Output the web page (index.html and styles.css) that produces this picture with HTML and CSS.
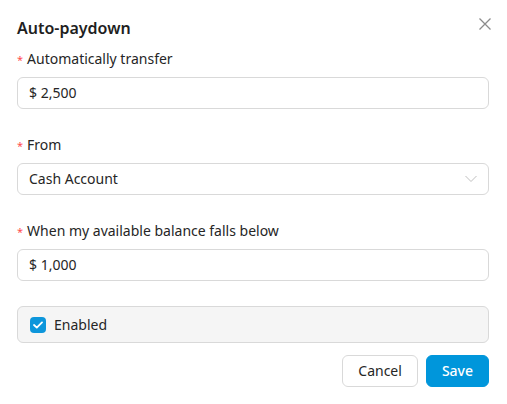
FILE: index.html
```html
<!DOCTYPE html>
<html>
<head>
<meta charset="utf-8">
<link rel="stylesheet" href="styles.css">
</head>
<body>
<div class="modal">
  <div class="header">
    <h1 class="title">Auto-paydown</h1>
    <button class="close" aria-label="Close">
      <svg width="12" height="12" viewBox="0 0 12 12"><path d="M0.5 0.5L11.5 11.5M11.5 0.5L0.5 11.5" stroke="#8c8c8c" stroke-width="1.3" fill="none"/></svg>
    </button>
  </div>
  <div class="field">
    <label class="label"><span class="req">*</span>Automatically transfer</label>
    <div class="input">$ 2,500</div>
  </div>
  <div class="field">
    <label class="label"><span class="req">*</span>From</label>
    <div class="input select">
      <span>Cash Account</span>
      <svg width="12" height="8" viewBox="0 0 12 8"><path d="M0.5 1L6 6.5L11.5 1" stroke="#bfbfbf" stroke-width="1" fill="none"/></svg>
    </div>
  </div>
  <div class="field">
    <label class="label"><span class="req">*</span>When my available balance falls below</label>
    <div class="input">$ 1,000</div>
  </div>
  <div class="enabled">
    <span class="check">
      <svg width="10" height="8" viewBox="0 0 10 8"><path d="M1 4L3.8 6.6L9 1.4" stroke="#fff" stroke-width="1.8" fill="none" stroke-linecap="round" stroke-linejoin="round"/></svg>
    </span>
    <span>Enabled</span>
  </div>
  <div class="footer">
    <button class="btn">Cancel</button>
    <button class="btn primary">Save</button>
  </div>
</div>
</body>
</html>
```
FILE: styles.css
```css
html, body {
  margin: 0;
  padding: 0;
  background: #fff;
}
body {
  font-family: "Noto Sans", "Open Sans", sans-serif;
  color: #262626;
  font-size: 14px;
}
.modal {
  padding: 16px 18px 0 17px;
}
.header {
  display: flex;
  justify-content: space-between;
  align-items: flex-start;
  height: 32px;
}
.title {
  margin: 0;
  font-size: 16px;
  font-weight: 600;
  line-height: 24px;
  color: #1f1f1f;
}
.close {
  border: 0;
  background: none;
  padding: 0;
  margin-top: 2px;
  margin-right: -2px;
  width: 12px;
  height: 12px;
  display: flex;
  cursor: pointer;
}
.field {
  margin-bottom: 25px;
}
.label {
  display: flex;
  align-items: baseline;
  height: 22px;
  line-height: 22px;
  margin-bottom: 7px;
  color: #262626;
}
.req {
  color: #ff4d4f;
  margin-right: 4px;
  font-size: 11px;
}
.input {
  box-sizing: border-box;
  height: 32px;
  border: 1px solid #d9d9d9;
  border-radius: 6px;
  padding: 0 11px;
  display: flex;
  align-items: center;
  line-height: 22px;
}
.select {
  justify-content: space-between;
}
.enabled {
  box-sizing: border-box;
  height: 37px;
  margin-top: 25px;
  border: 1px solid #d9d9d9;
  border-radius: 6px;
  background: #f5f5f5;
  display: flex;
  align-items: center;
  padding: 0 12px;
  gap: 8px;
}
.check {
  width: 16px;
  height: 16px;
  border-radius: 4px;
  background: #0d96db;
  display: flex;
  align-items: center;
  justify-content: center;
}
.footer {
  display: flex;
  justify-content: flex-end;
  gap: 8px;
  margin-top: 12px;
}
.btn {
  font-family: inherit;
  font-size: 14px;
  height: 32px;
  box-sizing: border-box;
  border: 1px solid #d9d9d9;
  border-radius: 6px;
  background: #fff;
  color: #262626;
  padding: 0 15px;
  line-height: 22px;
}
.primary {
  background: #0096db;
  border-color: #0096db;
  color: #fff;
  font-weight: 500;
}
```
